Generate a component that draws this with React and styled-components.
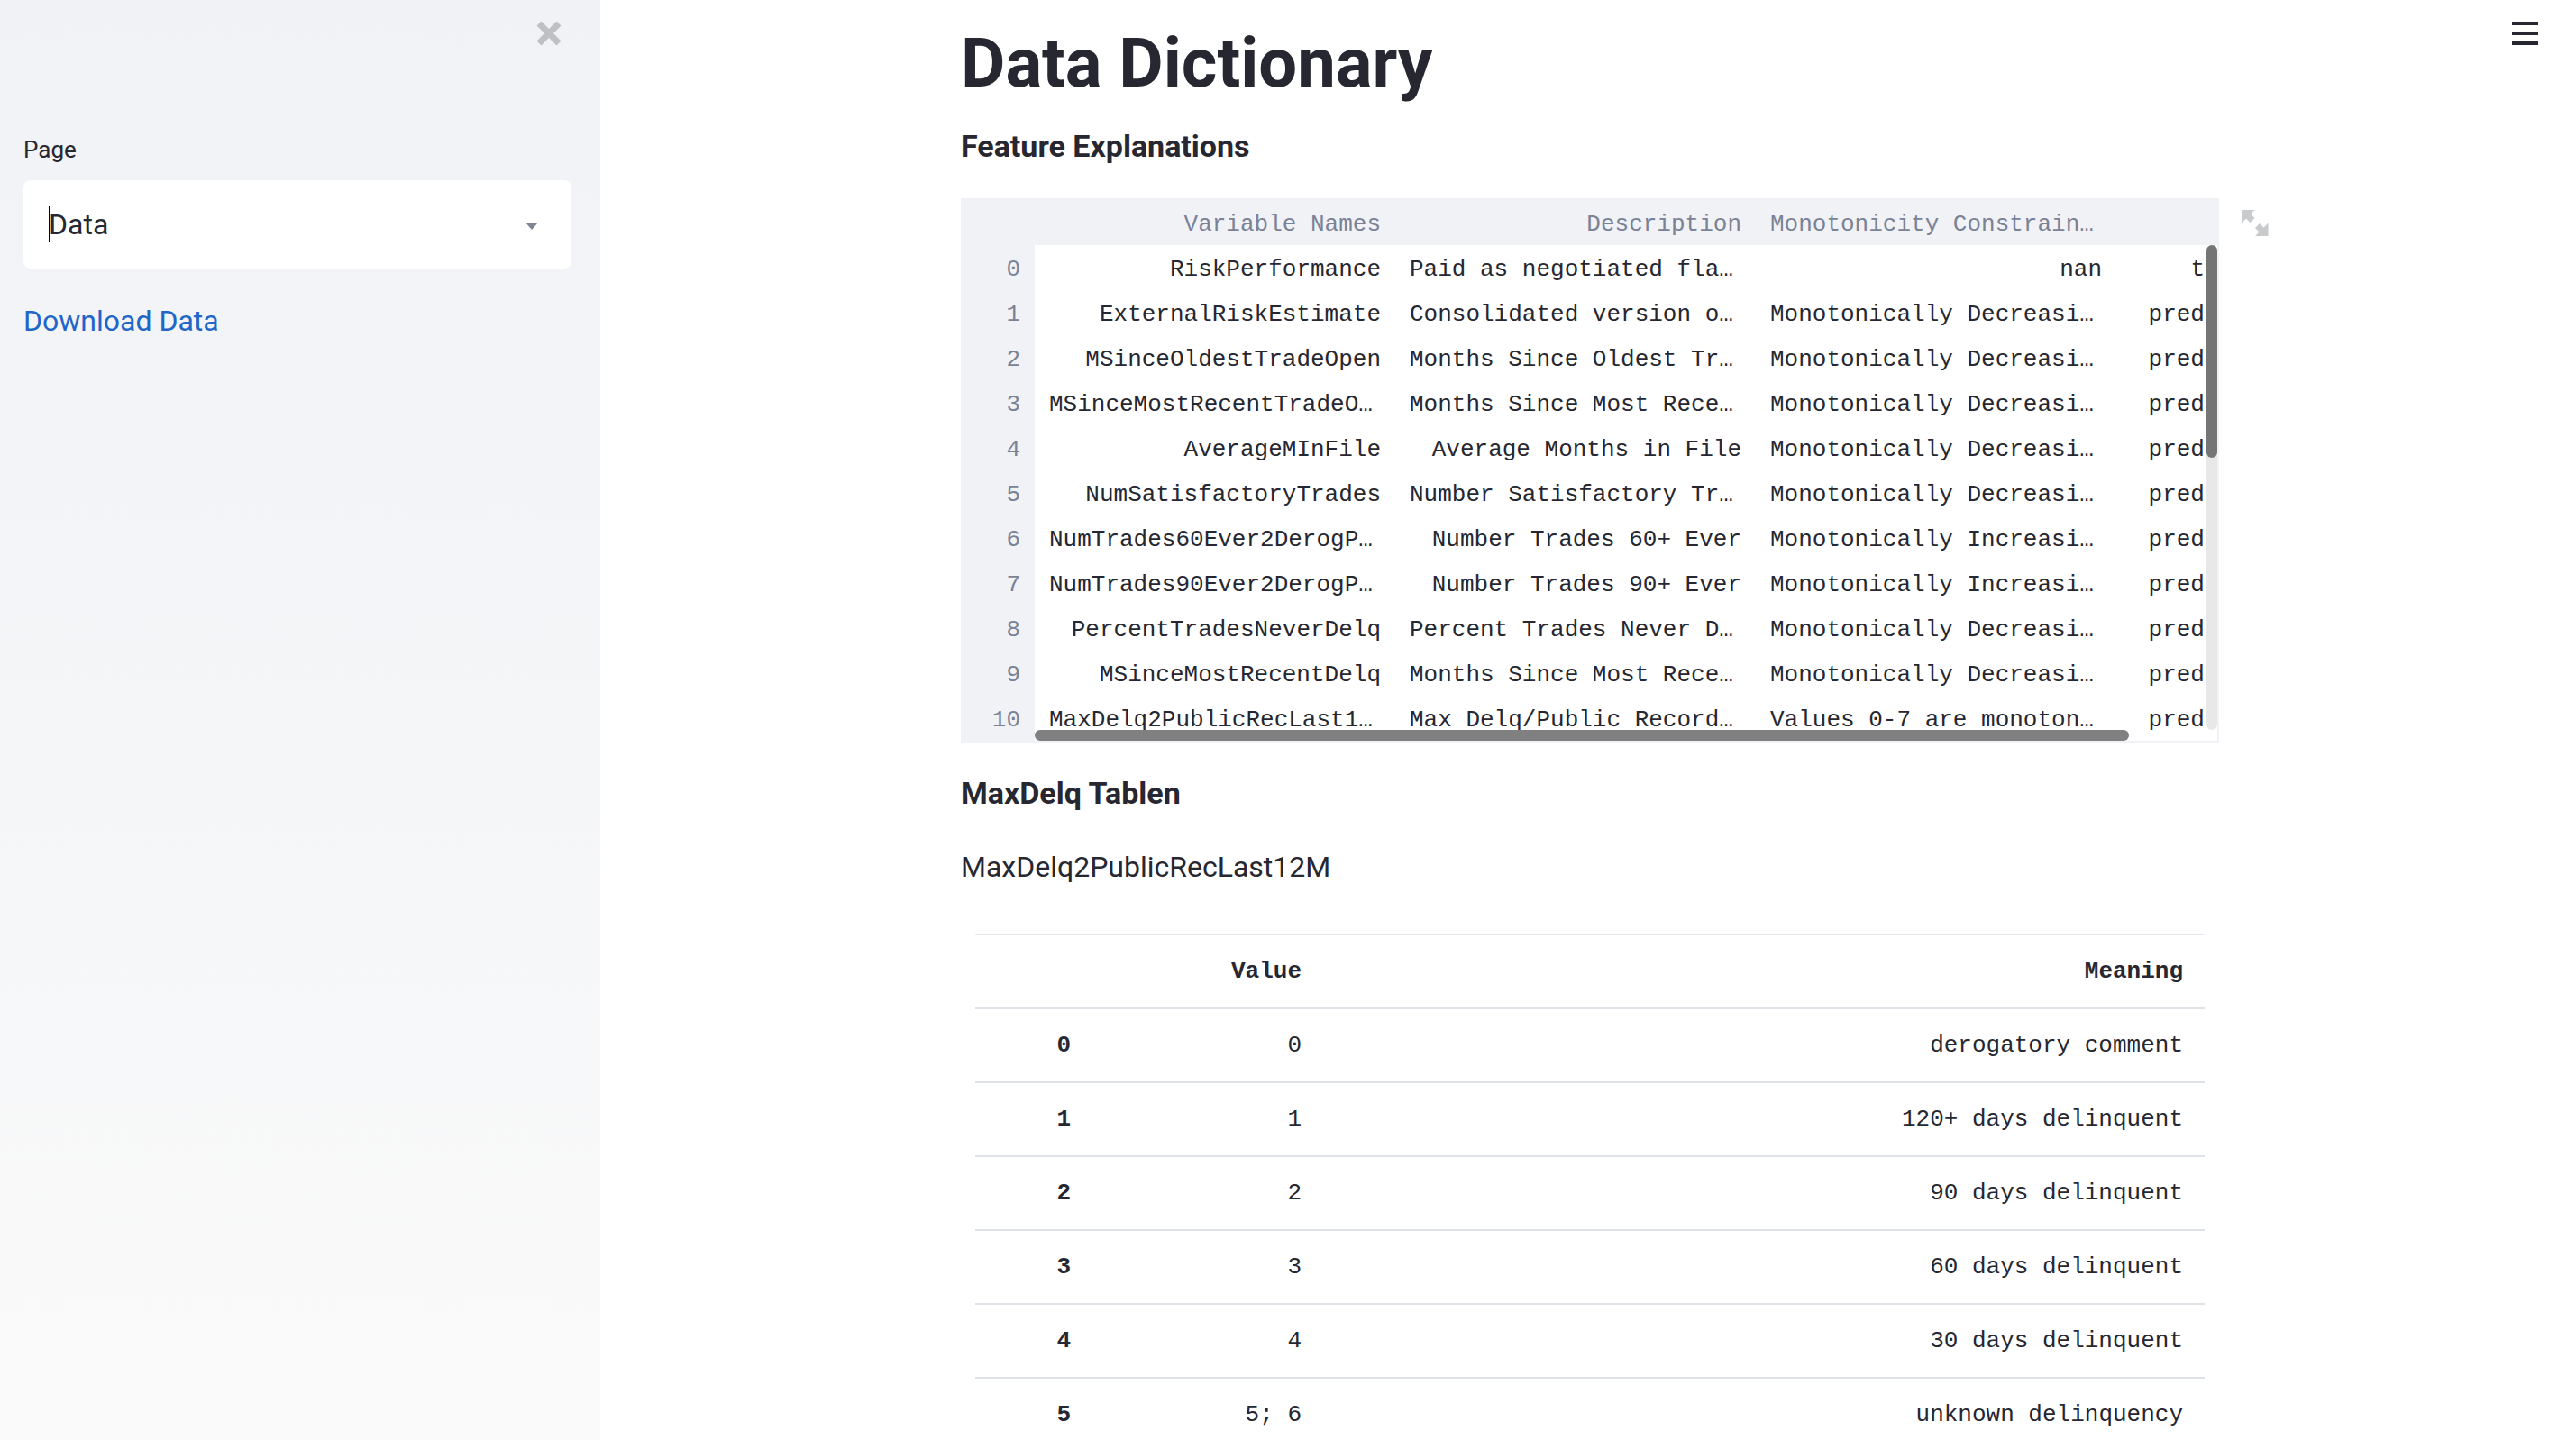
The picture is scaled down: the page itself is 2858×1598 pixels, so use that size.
import React from 'react';
import styled, { createGlobalStyle } from 'styled-components';

const sans = `Roboto, "Liberation Sans", sans-serif`;
const mono = `"Liberation Mono", monospace`;
const ink = '#262730';
const muted = '#7a8296';
const panel = '#f0f2f6';

const GlobalStyle = createGlobalStyle`
  *, *::before, *::after { box-sizing: border-box; }
  body { margin: 0; background: #fff; color: ${ink}; font-family: ${sans}; font-size: 32px; line-height: 48px; }
  button { border: 0; padding: 0; background: none; display: block; cursor: pointer; }
  svg { display: block; }
`;

const Shell = styled.div`
  display: grid;
  grid-template-columns: 666px minmax(0, 1fr);
  column-gap: 4px;
  height: 100vh;
  overflow: hidden;
`;

const Sidebar = styled.aside`
  display: flex;
  flex-direction: column;
  padding: 20px 32px 32px 26px;
  background: linear-gradient(180deg, ${panel}, #fafafa);
`;

const CloseButton = styled.button`
  align-self: flex-end;
  margin-right: 8px;
  color: #bfc0c3;
`;

const Field = styled.div`
  display: flex;
  flex-direction: column;
  gap: 14px;
  margin-top: 92px;
`;

const FieldLabel = styled.label`
  font-size: 26px;
  line-height: 40px;
`;

const SelectBox = styled.div`
  display: flex;
  align-items: center;
  padding: 0 36px 0 28px;
  height: 98px;
  border-radius: 8px;
  background: #fff;
`;

const Caret = styled.span`
  width: 2px;
  height: 40px;
  margin-right: -2px;
  background: #000;
`;

const Select = styled.select`
  flex: 1;
  height: 100%;
  padding: 0;
  border: 0;
  outline: 0;
  appearance: none;
  background: none;
  color: inherit;
  font: inherit;
`;

const DownloadLink = styled.a`
  margin-top: 34px;
  color: #1f66c7;
  text-decoration: none;
`;

const Main = styled.main`
  position: relative;
  display: flex;
  justify-content: center;
  align-items: flex-start;
`;

const MenuButton = styled.button`
  position: absolute;
  top: 22px;
  right: 42px;
  color: ${ink};
`;

const Content = styled.div`
  display: flex;
  flex-direction: column;
  width: 100%;
  max-width: 1396px;
`;

const Title = styled.h1`
  margin: 22px 0 0;
  font-size: 76px;
  line-height: 96px;
  font-weight: 700;
`;

const Subtitle = styled.h2`
  margin: ${p => p.$top}px 0 0;
  font-size: 34px;
  line-height: 48px;
  font-weight: 700;
`;

const Paragraph = styled.p`
  margin: 34px 0 0;
`;

const FrameWrap = styled.div`
  position: relative;
  margin-top: 34px;
`;

const ExpandButton = styled.button`
  position: absolute;
  top: 13px;
  right: -55px;
  color: #c9cacc;
`;

const Frame = styled.div`
  display: grid;
  grid-template-columns: minmax(0, 1fr) 12px;
  border: 2px solid ${panel};
  height: 604px;
  overflow: hidden;
`;

const GridClip = styled.div`
  overflow: hidden;
  background: linear-gradient(90deg, ${panel} 80px, #fff 80px);
`;

const GridView = styled.div`
  height: 588px;
  overflow: hidden;
`;

const GridTable = styled.table`
  table-layout: fixed;
  width: 1472px;
  border-collapse: collapse;
  font-family: ${mono};
  font-size: 26px;
  line-height: 46px;
`;

const GridCol = styled.col`
  width: ${p => p.$width}px;
`;

const GridCell = styled.td`
  height: 50px;
  padding: 4px 16px 0;
  overflow: hidden;
  white-space: nowrap;
  text-align: ${p => (p.$cut ? 'left' : 'right')};
`;

const GridHead = styled(GridCell).attrs({ as: 'th' })`
  background: ${panel};
  color: ${muted};
  font-weight: 400;
`;

const Rail = styled.div`
  display: flex;
  flex-direction: column;
  height: 588px;
`;

const RailCorner = styled.div`
  height: 50px;
  background: ${panel};
`;

const VTrack = styled.div`
  flex: 1;
  border-radius: 6px;
  background: #e8e8e8;
`;

const VThumb = styled.div`
  height: 236px;
  border-radius: 6px;
  background: #757575;
`;

const HThumb = styled.div`
  width: 1214px;
  height: 12px;
  margin-left: 80px;
  border-radius: 6px;
  background: #808080;
`;

const DataTable = styled.table`
  table-layout: fixed;
  margin: 50px 16px 0;
  width: calc(100% - 32px);
  border-collapse: separate;
  border-spacing: 0;
  font-family: ${mono};
  font-size: 26px;
  line-height: 32px;
  text-align: right;
`;

const DataCell = styled.td`
  padding: 24px;
  border-top: 2px solid #dee2e6;
`;

const DataHead = styled(DataCell).attrs({ as: 'th' })`
  font-weight: 700;
  border-top-color: ${p => (p.$first ? '#e6eaf1' : '#dee2e6')};
`;

const dec = 'Monotonically Decreasi…';
const inc = 'Monotonically Increasi…';

const features = [
  ['RiskPerformance', 'Paid as negotiated fla…', 'nan', 'target'],
  ['ExternalRiskEstimate', 'Consolidated version o…', dec, 'predictor'],
  ['MSinceOldestTradeOpen', 'Months Since Oldest Tr…', dec, 'predictor'],
  ['MSinceMostRecentTradeO…', 'Months Since Most Rece…', dec, 'predictor'],
  ['AverageMInFile', 'Average Months in File', dec, 'predictor'],
  ['NumSatisfactoryTrades', 'Number Satisfactory Tr…', dec, 'predictor'],
  ['NumTrades60Ever2DerogP…', 'Number Trades 60+ Ever', inc, 'predictor'],
  ['NumTrades90Ever2DerogP…', 'Number Trades 90+ Ever', inc, 'predictor'],
  ['PercentTradesNeverDelq', 'Percent Trades Never D…', dec, 'predictor'],
  ['MSinceMostRecentDelq', 'Months Since Most Rece…', dec, 'predictor'],
  ['MaxDelq2PublicRecLast1…', 'Max Delq/Public Record…', 'Values 0-7 are monoton…', 'predictor'],
];

const headings = ['', 'Variable Names', 'Description', 'Monotonicity Constrain…', ''];

const meanings = [
  ['0', 'derogatory comment'],
  ['1', '120+ days delinquent'],
  ['2', '90 days delinquent'],
  ['3', '60 days delinquent'],
  ['4', '30 days delinquent'],
  ['5; 6', 'unknown delinquency'],
];

const isCut = text => text.endsWith('…');

function FeatureGrid() {
  return (
    <FrameWrap>
      <Frame>
        <GridClip>
          <GridView>
            <GridTable>
              <colgroup>
                <GridCol $width={80} />
                <GridCol $width={400} />
                <GridCol $width={400} />
                <GridCol $width={400} />
                <GridCol $width={192} />
              </colgroup>
              <thead>
                <tr>
                  {headings.map((h, i) => (
                    <GridHead key={i} $cut={isCut(h)}>{h}</GridHead>
                  ))}
                </tr>
              </thead>
              <tbody>
                {features.map((row, i) => (
                  <tr key={row[0]}>
                    <GridHead scope="row">{i}</GridHead>
                    {row.map((text, j) => (
                      <GridCell key={j} $cut={isCut(text)}>{text}</GridCell>
                    ))}
                  </tr>
                ))}
              </tbody>
            </GridTable>
          </GridView>
          <HThumb />
        </GridClip>
        <Rail>
          <RailCorner />
          <VTrack>
            <VThumb />
          </VTrack>
        </Rail>
      </Frame>
      <ExpandButton type="button" aria-label="View fullscreen">
        <svg width="30" height="30" viewBox="0 0 30 30" fill="currentColor">
          <path d="M0 0h14.5l-4.5 4.5 4.5 4.5-5 5-4.5-4.5-5 5z" />
          <path d="M29.5 29H15l4.5-4.5-4.5-4.5 5-5 4.5 4.5 5-5z" />
        </svg>
      </ExpandButton>
    </FrameWrap>
  );
}

export default function App() {
  return (
    <>
      <GlobalStyle />
      <Shell>
        <Sidebar>
          <CloseButton type="button" aria-label="Close sidebar">
            <svg width="32" height="34" viewBox="0 0 32 34" stroke="currentColor" strokeWidth="7">
              <path d="M4 6l22 22M26 6L4 28" />
            </svg>
          </CloseButton>
          <Field>
            <FieldLabel htmlFor="page">Page</FieldLabel>
            <SelectBox>
              <Caret />
              <Select id="page" defaultValue="Data">
                <option>Data</option>
              </Select>
              <svg width="16" height="12" viewBox="0 0 16 12" fill="#808495">
                <path d="M1 4h14L8 12z" />
              </svg>
            </SelectBox>
          </Field>
          <DownloadLink href="#download">Download Data</DownloadLink>
        </Sidebar>
        <Main>
          <Content>
            <Title>Data Dictionary</Title>
            <Subtitle $top={20}>Feature Explanations</Subtitle>
            <FeatureGrid />
            <Subtitle $top={32}>MaxDelq Tablen</Subtitle>
            <Paragraph>MaxDelq2PublicRecLast12M</Paragraph>
            <DataTable>
              <colgroup>
                <GridCol $width={130} />
                <GridCol $width={256} />
                <col />
              </colgroup>
              <thead>
                <tr>
                  <DataHead $first />
                  <DataHead $first>Value</DataHead>
                  <DataHead $first>Meaning</DataHead>
                </tr>
              </thead>
              <tbody>
                {meanings.map(([value, meaning], i) => (
                  <tr key={value}>
                    <DataHead scope="row">{i}</DataHead>
                    <DataCell>{value}</DataCell>
                    <DataCell>{meaning}</DataCell>
                  </tr>
                ))}
              </tbody>
            </DataTable>
          </Content>
          <MenuButton type="button" aria-label="Main menu">
            <svg width="29" height="30" viewBox="0 0 29 30" stroke="currentColor" strokeWidth="4">
              <path d="M0 4h29M0 15h29M0 26h29" />
            </svg>
          </MenuButton>
        </Main>
      </Shell>
    </>
  );
}
